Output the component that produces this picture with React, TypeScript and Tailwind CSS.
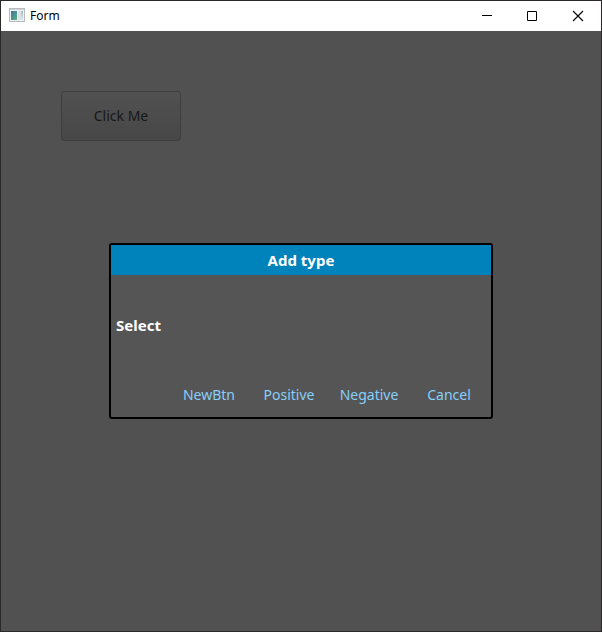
import { type ReactNode } from "react";

const actions = ["NewBtn", "Positive", "Negative", "Cancel"];

function AppIcon() {
  return (
    <svg width="16" height="16" viewBox="0 0 16 16" shapeRendering="crispEdges">
      <defs>
        <linearGradient id="pane" x1="0" y1="0" x2="1" y2="1">
          <stop offset="0" stopColor="#3f74a6" />
          <stop offset="1" stopColor="#5cb07c" />
        </linearGradient>
        <linearGradient id="strip" x1="0" y1="0" x2="0" y2="1">
          <stop offset="0" stopColor="#9fc4b4" />
          <stop offset="1" stopColor="#e2e6ee" />
        </linearGradient>
      </defs>
      <rect x="0" y="0" width="16" height="14" fill="#b9bcbf" />
      <rect x="1" y="1" width="14" height="1" fill="#d0d2d5" />
      <rect x="1" y="2" width="14" height="11" fill="#eff0f2" />
      <rect x="2" y="3" width="6" height="9" fill="url(#pane)" />
      <rect x="9" y="3" width="3" height="9" fill="#dde1ea" />
      <rect x="12" y="3" width="2" height="9" fill="url(#strip)" />
    </svg>
  );
}

interface WindowButtonProps {
  label: string;
  children: ReactNode;
}

function WindowButton({ label, children }: WindowButtonProps) {
  return (
    <button
      aria-label={label}
      className="flex h-full w-[46px] items-center justify-center hover:bg-gray-200"
    >
      <svg
        width="10"
        height="10"
        viewBox="0 0 10 10"
        fill="none"
        stroke="#000"
        className="overflow-visible"
      >
        {children}
      </svg>
    </button>
  );
}

function TitleBar() {
  return (
    <header className="flex h-[30px] shrink-0 items-center bg-white pl-2 text-black">
      <AppIcon />
      <h1 className="ml-[5px] flex-1 text-[12px]">Form</h1>
      <div className="flex h-full">
        <WindowButton label="Minimize">
          <path d="M1 4.5h10" />
        </WindowButton>
        <WindowButton label="Maximize">
          <path d="M0.5 0.5h9v9h-9z" />
        </WindowButton>
        <WindowButton label="Close">
          <path d="M0 0l10 10M10 0L0 10" strokeWidth="1.1" />
        </WindowButton>
      </div>
    </header>
  );
}

function AddTypeDialog() {
  return (
    <section
      role="dialog"
      aria-labelledby="dialog-title"
      className="w-[384px] rounded-[3px] border-2 border-black bg-[#555555]"
    >
      <h2
        id="dialog-title"
        className="bg-[#0082bb] text-center text-[15px] leading-[30px] font-bold text-white"
      >
        Add type
      </h2>
      <p className="px-[5px] text-[15px] leading-[100px] font-bold text-white">
        Select
      </p>
      <div className="flex justify-end pr-0.5 pb-0.5">
        {actions.map((action) => (
          <button
            key={action}
            className="h-10 w-20 pb-0.5 text-[14px] text-[#87cefa] hover:underline"
          >
            {action}
          </button>
        ))}
      </div>
    </section>
  );
}

export default function App() {
  return (
    <div className="flex min-h-screen flex-col border border-[#2b2829] bg-[#515151] font-['Noto_Sans',sans-serif]">
      <TitleBar />
      <main className="grid flex-1">
        <div className="col-start-1 row-start-1 p-[60px]">
          <button className="h-[50px] w-[120px] rounded-[3px] border border-[#3e3e3e] bg-linear-to-b from-[#515151] to-[#474747] pb-0.5 text-[14px] text-[#171717]">
            Click Me
          </button>
        </div>
        <div className="pointer-events-none col-start-1 row-start-1 flex items-center justify-center">
          <div className="pointer-events-auto">
            <AddTypeDialog />
          </div>
        </div>
      </main>
    </div>
  );
}
